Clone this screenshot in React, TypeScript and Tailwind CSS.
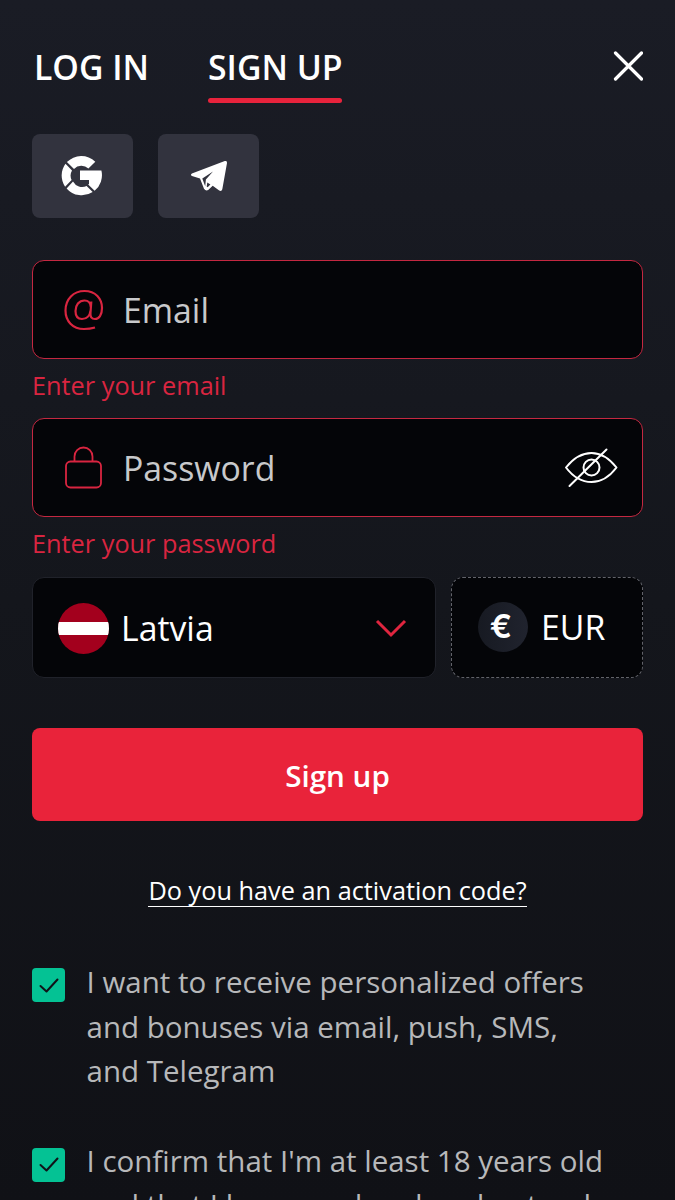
import React from 'react';

const GoogleIcon = () => (
  <svg className="mr-[2px] mb-px w-[41px] h-[41px]" viewBox="0 0 41 41" fill="none">
    <path
      d="M34.3 6.8A20 20 0 0 0 5.9 7.1L13 14A10.3 10.3 0 0 1 27.4 13.6Z"
      fill="white"
    />
    <path d="M4.5 8.7A20 20 0 0 0 4.1 31.7L10.6 25A10.3 10.3 0 0 1 11 15.5Z" fill="white" />
    <path d="M5.6 33.4A20 20 0 0 0 31.7 37L25.6 31A10.3 10.3 0 0 1 12 26.6Z" fill="white" />
    <path d="M19 15.6H40.4A20 20 0 0 1 33.6 35.8L26.9 29.2H28V25.1H19Z" fill="white" />
  </svg>
);

const TelegramIcon = () => (
  <svg className="w-[38px] h-[32px]" viewBox="0 0 38 32" fill="none">
    <path
      d="M34.8 1.1Q37.3 0.4 37 3L32.3 29.2Q31.6 31.8 29.2 30.5L22.7 25.8L18.2 30Q15.8 31.3 14 28.8L10 18.6L2 16Q0 14.8 1.9 13.5Z"
      fill="white"
    />
    <path d="M12.3 18.4L23 11.6L15.9 19.6L15.2 26.2Z" fill="#32333e" />
    <path d="M16.7 26.4L17.3 22.4L20.4 24.6L17.6 27.2Z" fill="#32333e" />
  </svg>
);

const LockIcon = () => (
  <svg className="w-10 h-[43px]" viewBox="0 0 40 43" fill="none" stroke="#d92540" strokeWidth="1.8">
    <rect x="3" y="15.5" width="35" height="26" rx="4.5" />
    <path d="M11.5 15.5V10.5A9 9 0 0 1 29.5 10.5V15.5" />
  </svg>
);

const EyeOffIcon = () => (
  <svg className="w-[54px] h-10" viewBox="0 0 54 40" fill="none" stroke="white" strokeWidth="2">
    <path
      d="M2 19.5C8 12 17 5 27.5 5S46.5 12 52.5 19.5C46.5 27.5 38 34 27.5 34S8 27.5 2 19.5Z"
      strokeLinejoin="round"
    />
    <circle cx="27.5" cy="19.5" r="8" />
    <path d="M5.5 38L42.5 1.5" strokeLinecap="round" />
  </svg>
);

const Checkbox = () => (
  <span className="mt-2 w-[33px] h-[34px] shrink-0 rounded bg-[#04c294] flex items-center justify-center">
    <svg className="w-5 h-[15px]" viewBox="0 0 20 15" fill="none">
      <path d="M1.5 8L7.5 13.5L18.5 1.5" stroke="#101318" strokeWidth="2" strokeLinecap="round" strokeLinejoin="round" />
    </svg>
  </span>
);

const App: React.FC = () => {
  return (
    <div className="h-[1200px] w-[675px] overflow-hidden bg-linear-to-b from-[#1a1c25] via-[#14161c] to-[#101116] px-8 font-['Open_Sans',sans-serif] text-white">
      <header className="flex items-start pt-[43px] pl-[2px] text-[33.8px] leading-[48px] font-semibold">
        <button className="w-[174px] text-left">LOG IN</button>
        <button className="w-[134px] whitespace-nowrap">
          SIGN UP
          <span className="mt-[7px] block h-[5px] rounded-full bg-[#e8233c]" />
        </button>
        <button className="mt-[8px] ml-auto">
          <svg className="w-[30px] h-[30px]" viewBox="0 0 30 30" stroke="white" strokeWidth="3.2" strokeLinecap="round">
            <path d="M2.5 2L28.5 28M28.5 2L2.5 28" />
          </svg>
        </button>
      </header>

      <div className="mt-[31px] flex gap-[25px]">
        <button className="w-[101px] h-[84px] rounded-lg bg-[#32333e] flex items-center justify-center">
          <GoogleIcon />
        </button>
        <button className="w-[101px] h-[84px] rounded-lg bg-[#32333e] flex items-center justify-center">
          <TelegramIcon />
        </button>
      </div>

      <div className="mt-[42px] flex h-[99px] items-center rounded-xl border border-[#c42841] bg-[#040508] pl-[30px]">
        <svg className="w-[42px] h-[42px]" viewBox="0 0 42 42" fill="none" stroke="#d92540" strokeWidth="2.2">
          <path d="M32 38.5Q27 40 21 40C9.5 40 2.5 32 2.5 21.5C2.5 10 10.5 2 21.5 2C32.5 2 39 9.5 39 19C39 26 36 30 32 30C28.5 30 27 27.5 27.5 24L28.3 12.5M27.8 18C27.5 14 25 11.5 21.5 11.5C16 11.5 12.5 16 12.5 22C12.5 27 15 30 19 30C24 30 27 26 27.5 21.5" />
        </svg>
        <span className="mt-[2px] ml-[18px] text-[33.8px] text-[#c8c9cb]">Email</span>
      </div>
      <p className="h-[59px] pt-[8px] text-[25.3px] leading-[36px] text-[#d92540]">Enter your email</p>

      <div className="flex h-[99px] items-center rounded-xl border border-[#c42841] bg-[#040508] pr-6 pl-[30px]">
        <LockIcon />
        <span className="mt-[2px] ml-5 text-[33.8px] text-[#c8c9cb]">Password</span>
        <button className="ml-auto">
          <EyeOffIcon />
        </button>
      </div>
      <p className="h-[60px] pt-[8px] text-[25.3px] leading-[36px] text-[#d92540]">Enter your password</p>

      <div className="flex gap-[15px]">
        <button className="flex h-[101px] w-[404px] items-center rounded-xl border border-[#20222a] bg-[#040508] pt-px pr-7 pl-[25px] text-[33.8px]">
          <span className="flex h-[51px] w-[51px] flex-col justify-center overflow-hidden rounded-full bg-[#a3001d]">
            <span className="h-[13px] bg-white" />
          </span>
          <span className="mt-px ml-3">Latvia</span>
          <svg className="mt-px ml-auto w-8 h-[19px]" viewBox="0 0 32 19" fill="none" stroke="#e0253f" strokeWidth="3">
            <path d="M2 2L16 16L30 2" />
          </svg>
        </button>
        <button className="flex h-[101px] w-[192px] items-center rounded-xl border border-dashed border-[#62636a] bg-[#040508] pb-px pl-[26px] text-[33.8px]">
          <span className="flex h-[50px] w-[50px] items-center justify-center rounded-full bg-linear-to-r from-[#171a22] to-[#20232e] pr-1 font-['Inter',sans-serif] text-[33px] font-semibold">€</span>
          <span className="ml-[13px]">EUR</span>
        </button>
      </div>

      <button className="mt-[50px] block h-[93px] w-full rounded-lg bg-[#e9233a] pt-[3px] text-[29.6px] font-semibold">Sign up</button>

      <div className="mt-[53px] flex justify-center">
        <a className="border-b border-white text-[25.3px] leading-[32px]">Do you have an activation code?</a>
      </div>

      <div className="mt-[53px] flex text-[29.5px] leading-[44.5px] text-[#b7b8ba]">
        <Checkbox />
        <p className="ml-[21.5px]">
          I want to receive personalized offers
          <br />
          and bonuses via email, push, SMS,
          <br />
          and Telegram
        </p>
      </div>

      <div className="mt-[46px] flex text-[29.5px] leading-[44.5px] text-[#b7b8ba]">
        <Checkbox />
        <p className="-mt-px ml-[21.5px] whitespace-nowrap">
          I confirm that I'm at least 18 years old
          <br />
          and that I have read and understood
        </p>
      </div>
    </div>
  );
};

export default App;
